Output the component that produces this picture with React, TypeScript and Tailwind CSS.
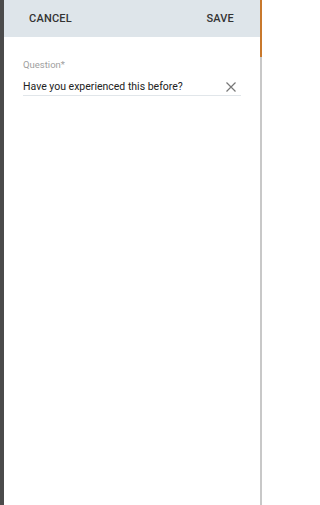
import React from "react";

export default function App() {
  return (
    <div
      className="flex h-[505px] w-[262px] overflow-hidden bg-[#4b4b4b]"
      style={{ fontFamily: "Roboto, 'Liberation Sans', sans-serif" }}
    >
      <div className="w-[4px] shrink-0 bg-[#4b4b4b]" />
      <div className="flex w-[256px] shrink-0 flex-col bg-white">
        <div className="flex h-[37px] items-center justify-between bg-[#dee5ea] pl-[25px] pr-[26px] pt-[2px]">
          <span className="text-[11px] font-medium tracking-[0.2px] text-[#333]">CANCEL</span>
          <span className="text-[11px] font-medium tracking-[0.2px] text-[#333]">SAVE</span>
        </div>
        <div className="px-[19px] pt-[22px]">
          <div className="text-[9.5px] leading-[12px] text-[#9e9e9e]">Question*</div>
          <div className="mt-[9px] flex items-center justify-between border-b border-[#e1e6ea] pb-[1px]">
            <span className="text-[10.5px] leading-[14px] text-[#222]">Have you experienced this before?</span>
            <svg width="10" height="10" viewBox="0 0 10 10" className="mr-[5px]">
              <path d="M0.5 0.5 L9.5 9.5 M9.5 0.5 L0.5 9.5" stroke="#777" strokeWidth="1.2" />
            </svg>
          </div>
        </div>
      </div>
      <div className="flex w-[2px] shrink-0 flex-col">
        <div className="h-[57px] bg-[#c8782c]" />
        <div className="flex-1 bg-[#c8c8c8]" />
      </div>
    </div>
  );
}
